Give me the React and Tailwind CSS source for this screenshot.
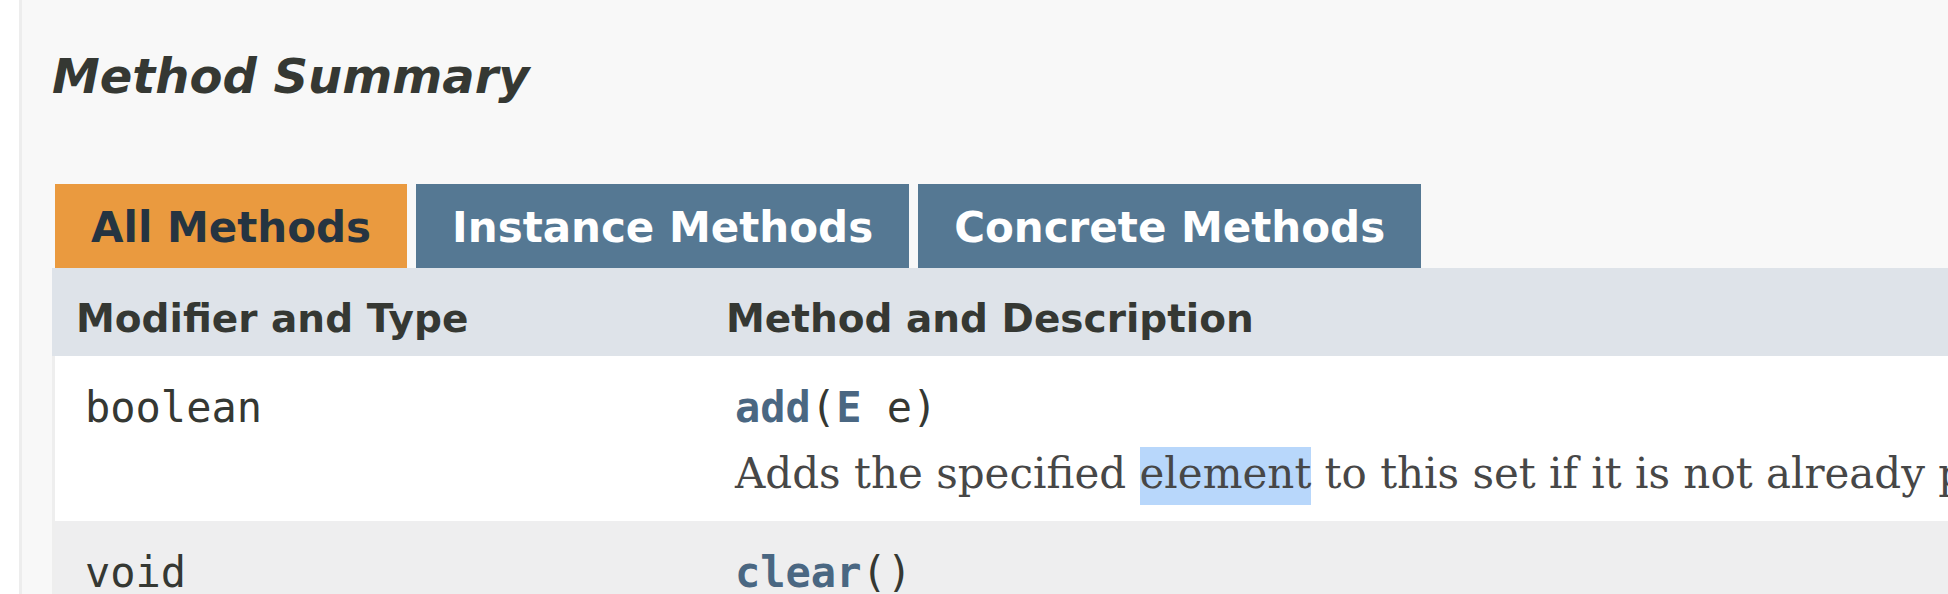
export default function App() {
  return (
    <div className="w-[1948px] h-[594px] overflow-hidden bg-white flex font-['DejaVu_Sans',sans-serif]">
      <div className="w-[19px] shrink-0" />
      <div className="flex-1 min-w-0 border-l-[3px] border-[#ededed] bg-[#f8f8f8] pl-[30px] pt-[48px]">
        <h3 className="text-[48px] font-bold italic leading-[56px] text-[#353833] whitespace-nowrap">
          Method Summary
        </h3>
        <div className="mt-[80px] flex pl-[3px] whitespace-nowrap text-[42px] font-bold leading-[49px]">
          <div className="h-[84px] pt-[19px] px-[36px] mr-[9px] bg-[#ea9a3f] text-[#253441]">All Methods</div>
          <div className="h-[84px] pt-[19px] px-[36px] mr-[9px] bg-[#557893] text-white">Instance Methods</div>
          <div className="h-[84px] pt-[19px] px-[36px] mr-[9px] bg-[#557893] text-white">Concrete Methods</div>
        </div>
        <div className="flex h-[88px] bg-[#dee3e9] pt-[24px] text-[39px] font-bold leading-[54px] text-[#353833] whitespace-nowrap">
          <div className="w-[653px] shrink-0 pl-[24px]">Modifier and Type</div>
          <div className="pl-[21px]">Method and Description</div>
        </div>
        <div className="flex border-l-[3px] border-[#eeeeee] bg-white pt-[24px] pb-[17px] whitespace-nowrap">
          <div className="w-[650px] shrink-0 pl-[30px] font-['DejaVu_Sans_Mono',monospace] text-[42px] leading-[56px] text-[#353833]">
            boolean
          </div>
          <div className="pl-[30px]">
            <div className="font-['DejaVu_Sans_Mono',monospace] text-[42px] leading-[56px] text-[#353833]">
              <span className="font-bold text-[#4a6782]">add</span>(<span className="font-bold text-[#4a6782]">E</span> e)
            </div>
            <div className="mt-[9px] font-['DejaVu_Serif',serif] text-[42px] leading-[58.8px] text-[#474747]">
              Adds the specified <span className="bg-[#b8d7fb] pt-[2px] pb-[7px]">element</span> to this set if it is not already present.
            </div>
          </div>
        </div>
        <div className="flex border-l-[3px] border-[#eeeeee] bg-[#eeeeef] pt-[24px] pb-[17px] whitespace-nowrap">
          <div className="w-[650px] shrink-0 pl-[30px] font-['DejaVu_Sans_Mono',monospace] text-[42px] leading-[56px] text-[#353833]">
            void
          </div>
          <div className="pl-[30px]">
            <div className="font-['DejaVu_Sans_Mono',monospace] text-[42px] leading-[56px] text-[#353833]">
              <span className="font-bold text-[#4a6782]">clear</span>()
            </div>
            <div className="mt-[9px] font-['DejaVu_Serif',serif] text-[42px] leading-[58.8px] text-[#474747]">
              Removes all of the elements from this set.
            </div>
          </div>
        </div>
      </div>
    </div>
  );
}
